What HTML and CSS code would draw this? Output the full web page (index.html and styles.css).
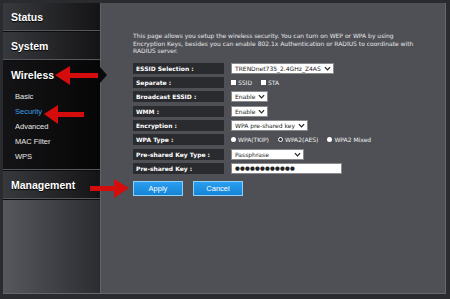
FILE: index.html
```html
<!DOCTYPE html>
<html lang="en">
<head>
    <meta charset="UTF-8">
    <title>Wireless Security</title>
    <link rel="stylesheet" href="styles.css">
</head>
<body>
    <div class="frame">
        <nav class="sidebar">
            <div class="nav-block"><span class="nav-title">Status</span></div>
            <div class="nav-block"><span class="nav-title">System</span></div>
            <div class="nav-block active">
                <span class="nav-title">Wireless</span>
                <ul class="sub-nav">
                    <li>Basic</li>
                    <li class="current">Security</li>
                    <li>Advanced</li>
                    <li>MAC Filter</li>
                    <li>WPS</li>
                </ul>
            </div>
            <div class="nav-block"><span class="nav-title">Management</span></div>
            <div class="nav-fill"></div>
        </nav>

        <main class="content">
            <p class="intro">This page allows you setup the wireless security. You can turn on WEP or WPA by using<br>Encryption Keys, besides you can enable 802.1x Authentication or RADIUS to coordinate with<br>RADIUS server.</p>

            <div class="form-grid">
                <div class="label">ESSID Selection :</div>
                <div class="value"><span class="select">TRENDnet735_2.4GHz_Z4AS<svg class="chev" viewBox="0 0 8 5"><path d="M1 1l3 3 3-3"/></svg></span></div>

                <div class="label">Separate :</div>
                <div class="value">
                    <span class="check"></span><span class="opt">SSID</span>
                    <span class="check"></span><span class="opt">STA</span>
                </div>

                <div class="label">Broadcast ESSID :</div>
                <div class="value"><span class="select">Enable<svg class="chev" viewBox="0 0 8 5"><path d="M1 1l3 3 3-3"/></svg></span></div>

                <div class="label">WMM :</div>
                <div class="value"><span class="select">Enable<svg class="chev" viewBox="0 0 8 5"><path d="M1 1l3 3 3-3"/></svg></span></div>

                <div class="label">Encryption :</div>
                <div class="value"><span class="select">WPA pre-shared key<svg class="chev" viewBox="0 0 8 5"><path d="M1 1l3 3 3-3"/></svg></span></div>

                <div class="label">WPA Type :</div>
                <div class="value">
                    <span class="radio"></span><span class="opt">WPA(TKIP)</span>
                    <span class="radio on"></span><span class="opt">WPA2(AES)</span>
                    <span class="radio"></span><span class="opt">WPA2 Mixed</span>
                </div>

                <div class="label">Pre-shared Key Type :</div>
                <div class="value"><span class="select wide">Passphrase<svg class="chev" viewBox="0 0 8 5"><path d="M1 1l3 3 3-3"/></svg></span></div>

                <div class="label">Pre-shared Key :</div>
                <div class="value"><span class="textbox">&#9679;&#9679;&#9679;&#9679;&#9679;&#9679;&#9679;&#9679;&#9679;&#9679;&#9679;&#9679;</span></div>
            </div>

            <div class="actions">
                <button class="btn">Apply</button>
                <button class="btn">Cancel</button>
            </div>
        </main>

        <!-- red callout arrows drawn over the screenshot -->
        <svg class="callouts" viewBox="0 0 450 299" width="450" height="299">
            <polygon points="55,75 70,66 70,73 98,73 98,78 70,78 70,85"/>
            <polygon points="44,114 58,105 58,112 84,112 84,117 58,117 58,124"/>
            <polygon points="129,188 114,179 114,186 90,186 90,191 114,191 114,198"/>
        </svg>
    </div>
</body>
</html>
```

FILE: styles.css
```css
/* General Styles */
body {
    margin: 0;
    background: #2a2b2f;
    font-family: "DejaVu Sans", Verdana, sans-serif;
    width: 450px;
    height: 299px;
    overflow: hidden;
}

.frame {
    position: relative;
    display: flex;
    margin: 3px 4px 0 3px;
    height: 290px;
    border-right: 1px solid #66686e;
    border-bottom: 1px solid #66686e;
}

/* Left menu */
.sidebar {
    width: 97px;
    display: flex;
    flex-direction: column;
    border-right: 1px solid #606268;
}

.nav-block {
    position: relative;
    border-bottom: 1px solid #0c0c0e;
    box-shadow: inset 0 -1px 0 #55575c;
    background: linear-gradient(to right, #38393d, #141416);
}

.nav-block:first-child {
    height: 28px;
}

.nav-title {
    display: flex;
    align-items: center;
    height: 28px;
    padding-left: 8px;
    color: #fff;
    font-family: "Liberation Sans", Arial, sans-serif;
    font-weight: bold;
    font-size: 10.5px;
    text-shadow: 0 1px 1px #000;
}

.nav-block.active {
    background: linear-gradient(to right, #141416, #060607);
    padding-bottom: 6px;
}

/* pointer next to the open section */
.nav-block.active::after {
    content: "";
    position: absolute;
    right: -7px;
    top: 6px;
    border-top: 8px solid transparent;
    border-bottom: 8px solid transparent;
    border-left: 7px solid #0a0a0b;
}

.sub-nav {
    list-style: none;
    margin: 0;
    padding: 0 0 0 12px;
}

.sub-nav li {
    height: 15px;
    line-height: 15px;
    color: #e8e8e8;
    font-family: "Liberation Sans", Arial, sans-serif;
    font-size: 7.5px;
}

.sub-nav li.current {
    color: #3d9de6;
}

.nav-fill {
    flex: 1;
    background: linear-gradient(to right, #56585e, #2b2c30);
}

/* Right side */
.content {
    flex: 1;
    background: #4e5056;
    padding: 29px 0 0 32px;
}

.intro {
    margin: 0 0 8px;
    color: #e6e6e6;
    font-size: 6px;
    line-height: 7.6px;
    white-space: nowrap;
}

.form-grid {
    display: grid;
    grid-template-columns: 91px auto;
    column-gap: 5px;
    row-gap: 3.3px;
    grid-auto-rows: 11px;
}

.label {
    background: #2a2b2f;
    color: #fff;
    font-weight: bold;
    font-size: 6px;
    line-height: 11px;
    padding-left: 3px;
    white-space: nowrap;
}

.value {
    display: flex;
    align-items: center;
    padding-left: 2px;
    color: #f0f0f0;
    font-size: 6px;
}

.select,
.textbox {
    display: inline-flex;
    align-items: center;
    height: 9px;
    padding: 0 2px 0 3px;
    background: #fff;
    border: 1px solid #8a8a8a;
    color: #222;
    font-size: 6px;
    white-space: nowrap;
}

.select.wide {
    width: 66px;
    justify-content: space-between;
}

.chev {
    width: 7px;
    height: 5px;
    margin-left: 3px;
    fill: none;
    stroke: #222;
    stroke-width: 1.4;
}

.textbox {
    width: 104px;
    font-size: 5.5px;
    letter-spacing: 0.2px;
}

.check {
    width: 5px;
    height: 5px;
    background: #fff;
    margin-right: 2px;
}

.radio {
    width: 5px;
    height: 5px;
    border-radius: 50%;
    background: #fff;
    margin-right: 2px;
}

.radio.on {
    width: 3px;
    height: 3px;
    border: 1px solid #fff;
    background: #333;
}

.opt {
    margin-right: 9px;
}

.actions {
    display: flex;
    gap: 10px;
    margin-top: 7px;
}

.btn {
    width: 50px;
    height: 15px;
    padding: 0;
    background: linear-gradient(#2a9ef0, #1584d6);
    border: 1px solid #8fd0f6;
    color: #fff;
    font-family: "Liberation Sans", Arial, sans-serif;
    font-size: 7.5px;
}

.callouts {
    position: absolute;
    left: -3px;
    top: -3px;
    pointer-events: none;
    fill: #d40c0c;
}
```
